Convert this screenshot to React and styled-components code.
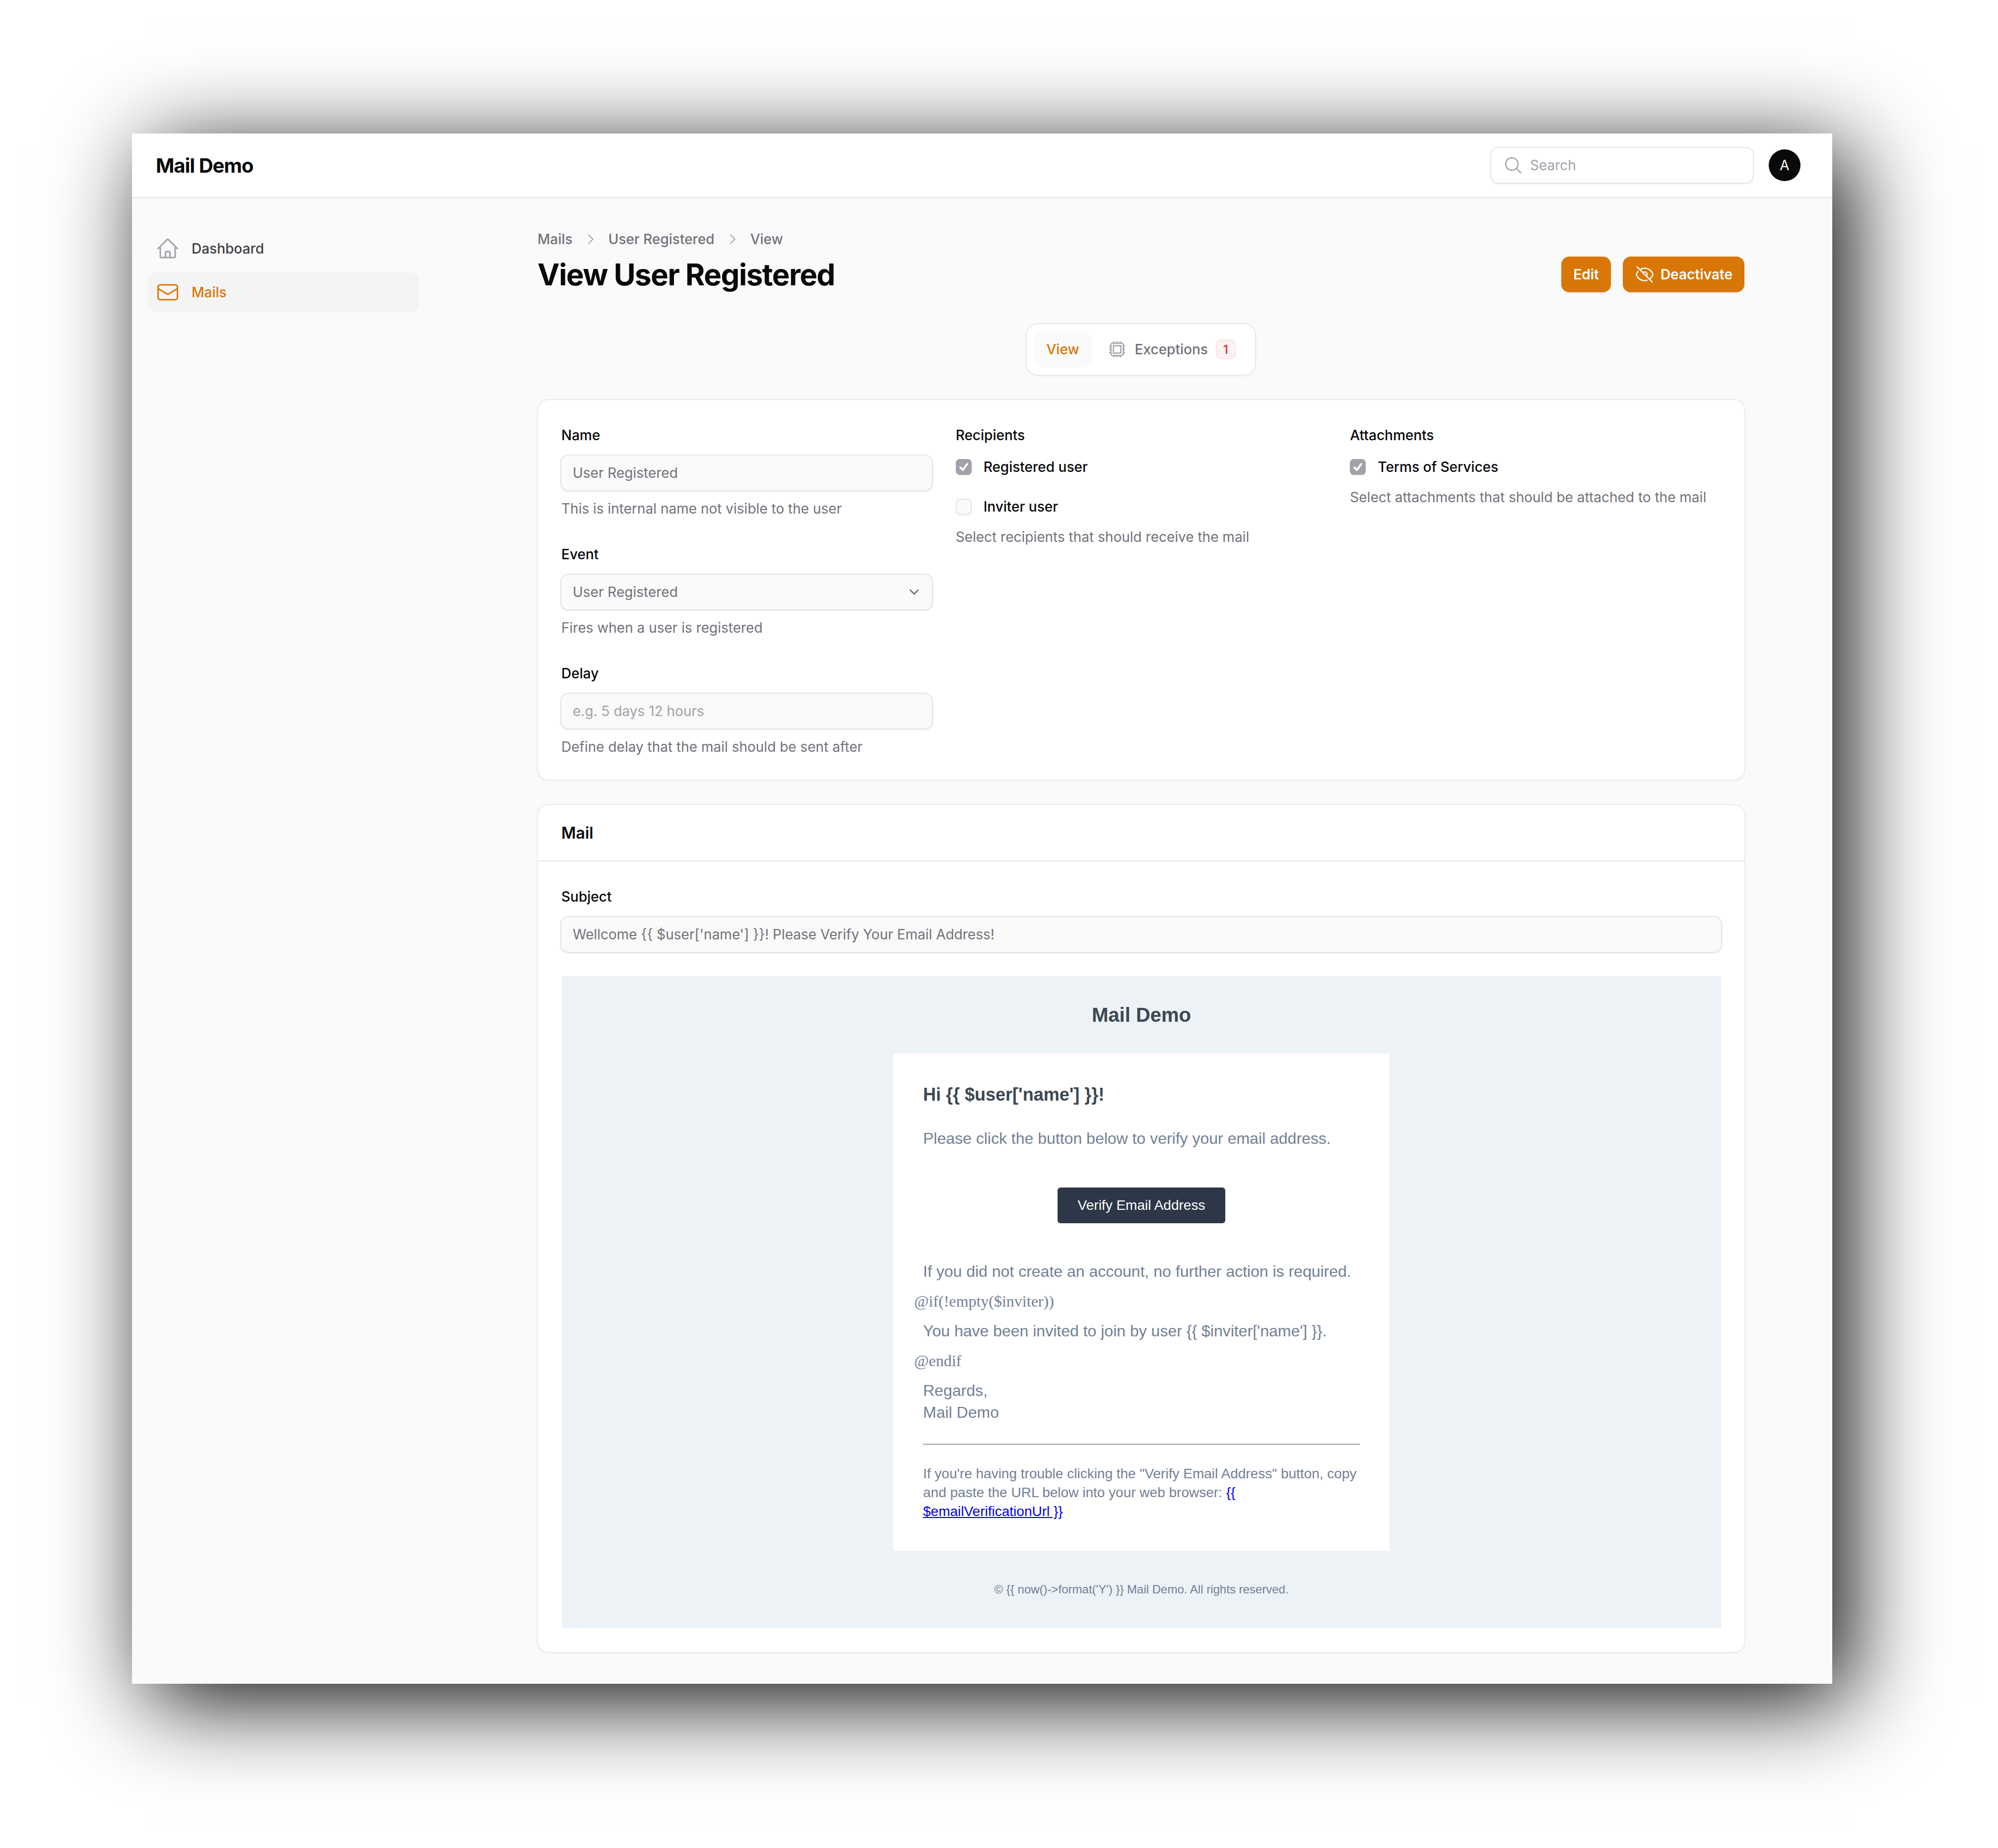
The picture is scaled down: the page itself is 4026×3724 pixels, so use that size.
import React from "react";
import styled, { createGlobalStyle } from "styled-components";

const GlobalStyle = createGlobalStyle`
  html, body { margin: 0; padding: 0; background: #fff; }
  * { box-sizing: border-box; }
  body { font-family: Inter, "Liberation Sans", sans-serif; }
`;

const Icon = ({ d, size = 40, width = 1.5, color = "currentColor" }) => (
  <svg width={size} height={size} viewBox="0 0 24 24" fill="none" stroke={color} strokeWidth={width} strokeLinecap="round" strokeLinejoin="round" style={{ flexShrink: 0 }}>
    <path d={d} />
  </svg>
);

const paths = {
  home: "m2.25 12 8.954-8.955c.44-.439 1.152-.439 1.591 0L21.75 12M4.5 9.75v10.125c0 .621.504 1.125 1.125 1.125H9.75v-4.875c0-.621.504-1.125 1.125-1.125h2.25c.621 0 1.125.504 1.125 1.125V21h4.125c.621 0 1.125-.504 1.125-1.125V9.75M8.25 21h8.25",
  mail: "M21.75 6.75v10.5a2.25 2.25 0 0 1-2.25 2.25h-15a2.25 2.25 0 0 1-2.25-2.25V6.75m19.5 0A2.25 2.25 0 0 0 19.5 4.5h-15a2.25 2.25 0 0 0-2.25 2.25m19.5 0v.243a2.25 2.25 0 0 1-1.07 1.916l-7.5 4.615a2.25 2.25 0 0 1-2.36 0L3.32 8.91a2.25 2.25 0 0 1-1.07-1.916V6.75",
  eyeSlash: "M3.98 8.223A10.477 10.477 0 0 0 1.934 12C3.226 16.338 7.244 19.5 12 19.5c.993 0 1.953-.138 2.863-.395M6.228 6.228A10.451 10.451 0 0 1 12 4.5c4.756 0 8.773 3.162 10.065 7.498a10.522 10.522 0 0 1-4.293 5.774M6.228 6.228 3 3m3.228 3.228 3.65 3.65m7.894 7.894L21 21m-3.228-3.228-3.65-3.65m0 0a3 3 0 1 0-4.243-4.243m4.242 4.242L9.88 9.88",
  cpu: "M8.25 3v1.5M4.5 8.25H3m18 0h-1.5M4.5 12H3m18 0h-1.5m-15 3.75H3m18 0h-1.5M8.25 19.5V21M12 3v1.5m0 15V21m3.75-18v1.5m0 15V21m-9-1.5h10.5a2.25 2.25 0 0 0 2.25-2.25V6.75a2.25 2.25 0 0 0-2.25-2.25H6.75A2.25 2.25 0 0 0 4.5 6.75v10.5a2.25 2.25 0 0 0 2.25 2.25Zm.75-12h9v9h-9v-9Z",
  search: "m21 21-5.197-5.197m0 0A7.5 7.5 0 1 0 5.196 5.196a7.5 7.5 0 0 0 10.607 10.607Z",
  chevronRight: "m9 5.5 6.5 6.5L9 18.5",
  chevronDown: "m6 9 6 6 6-6",
};

function Field({ label, help, children }) {
  return (
    <FieldBox>
      <Label>{label}</Label>
      {children}
      <Help>{help}</Help>
    </FieldBox>
  );
}

function Check({ checked, children }) {
  return (
    <CheckRow>
      <CheckBox $checked={checked}>
        {checked && (
          <svg width="32" height="32" viewBox="0 0 16 16" fill="none" stroke="#fff" strokeWidth="2" strokeLinecap="round" strokeLinejoin="round">
            <path d="m4.5 8.5 2.5 2.5 4.5-6" />
          </svg>
        )}
      </CheckBox>
      {children}
    </CheckRow>
  );
}

export default function App() {
  return (
    <Page>
      <GlobalStyle />
      <Window>
        <TopBar>
          <Brand>Mail Demo</Brand>
          <TopRight>
            <SearchBox>
              <Icon d={paths.search} color="#a1a1aa" />
              <SearchText>Search</SearchText>
            </SearchBox>
            <Avatar>A</Avatar>
          </TopRight>
        </TopBar>
        <Body>
          <Sidebar>
            <NavItem>
              <Icon d={paths.home} size={48} color="#a1a1aa" />
              Dashboard
            </NavItem>
            <NavItem $active>
              <Icon d={paths.mail} size={48} color="#d97706" />
              Mails
            </NavItem>
          </Sidebar>
          <Main>
            <HeaderRow>
              <div>
                <Crumbs>
                  <span>Mails</span>
                  <Icon d={paths.chevronRight} size={32} color="#a1a1aa" />
                  <span>User Registered</span>
                  <Icon d={paths.chevronRight} size={32} color="#a1a1aa" />
                  <span>View</span>
                </Crumbs>
                <Title>View User Registered</Title>
              </div>
              <Actions>
                <Button>Edit</Button>
                <Button>
                  <Icon d={paths.eyeSlash} color="#fff" />
                  Deactivate
                </Button>
              </Actions>
            </HeaderRow>

            <TabsWrap>
              <Tabs>
                <Tab $active>View</Tab>
                <Tab>
                  <Icon d={paths.cpu} color="#a1a1aa" />
                  Exceptions
                  <Badge>1</Badge>
                </Tab>
              </Tabs>
            </TabsWrap>

            <Card>
              <FormGrid>
                <Column>
                  <Field label="Name" help="This is internal name not visible to the user">
                    <TextInput readOnly value="User Registered" />
                  </Field>
                  <Field label="Event" help="Fires when a user is registered">
                    <SelectBox>
                      User Registered
                      <Icon d={paths.chevronDown} size={32} width={2} color="#6b7280" />
                    </SelectBox>
                  </Field>
                  <Field label="Delay" help="Define delay that the mail should be sent after">
                    <TextInput readOnly placeholder="e.g. 5 days 12 hours" />
                  </Field>
                </Column>
                <Column>
                  <FieldBox>
                    <Label>Recipients</Label>
                    <CheckList>
                      <Check checked>Registered user</Check>
                      <Check>Inviter user</Check>
                    </CheckList>
                    <Help>Select recipients that should receive the mail</Help>
                  </FieldBox>
                </Column>
                <Column>
                  <FieldBox>
                    <Label>Attachments</Label>
                    <CheckList>
                      <Check checked>Terms of Services</Check>
                    </CheckList>
                    <Help>Select attachments that should be attached to the mail</Help>
                  </FieldBox>
                </Column>
              </FormGrid>
            </Card>

            <MailCard>
              <MailHeader>Mail</MailHeader>
              <MailBody>
                <Label>Subject</Label>
                <TextInput readOnly value="Wellcome {{ $user['name'] }}! Please Verify Your Email Address!" />
                <EmailFrame>
                  <EmailBrand>Mail Demo</EmailBrand>
                  <EmailSheet>
                    <EmailHeading>Hi {"{{ $user['name'] }}"}!</EmailHeading>
                    <EmailIntro>Please click the button below to verify your email address.</EmailIntro>
                    <VerifyWrap>
                      <VerifyButton>Verify Email Address</VerifyButton>
                    </VerifyWrap>
                    <EmailText>If you did not create an account, no further action is required.</EmailText>
                    <RawLine>@if(!empty($inviter))</RawLine>
                    <EmailText>You have been invited to join by user {"{{ $inviter['name'] }}"}.</EmailText>
                    <RawLine>@endif</RawLine>
                    <EmailText>
                      Regards,
                      <br />
                      Mail Demo
                    </EmailText>
                    <Subcopy>
                      If you're having trouble clicking the "Verify Email Address" button, copy and paste the URL below into your web browser: <a href="#url">{"{{ $emailVerificationUrl }}"}</a>
                    </Subcopy>
                  </EmailSheet>
                  <EmailFooter>© {"{{ now()->format('Y') }}"} Mail Demo. All rights reserved.</EmailFooter>
                </EmailFrame>
              </MailBody>
            </MailCard>
          </Main>
        </Body>
      </Window>
    </Page>
  );
}

const Page = styled.div`
  width: 4026px;
  height: 3724px;
  padding: 269px 0 0 266px;
  overflow: hidden;
`;

const Window = styled.div`
  width: 3426px;
  height: 3124px;
  background: #fafafa;
  box-shadow: 34px 34px 176px rgba(0, 0, 0, 0.96);
  display: flex;
  flex-direction: column;
`;

const TopBar = styled.header`
  height: 130px;
  background: #fff;
  border-bottom: 2px solid #e6e6e7;
  padding: 0 64px 0 48px;
  display: flex;
  align-items: center;
  justify-content: space-between;
`;

const Brand = styled.div`
  font-size: 40px;
  font-weight: 700;
  letter-spacing: -1px;
  color: #09090b;
`;

const TopRight = styled.div`
  display: flex;
  align-items: center;
  gap: 30px;
`;

const SearchBox = styled.div`
  width: 531px;
  height: 74px;
  border: 2px solid #e4e4e7;
  border-radius: 16px;
  background: #fff;
  padding-left: 24px;
  display: flex;
  align-items: center;
  gap: 14px;
  box-shadow: 0 2px 3px rgba(0, 0, 0, 0.05);
`;

const SearchText = styled.span`
  font-size: 28px;
  color: #a1a1aa;
`;

const Avatar = styled.div`
  width: 64px;
  height: 64px;
  border-radius: 50%;
  background: #09090b;
  color: #fff;
  font-size: 28px;
  font-weight: 400;
  display: flex;
  align-items: center;
  justify-content: center;
`;

const Body = styled.div`
  flex: 1;
  display: flex;
`;

const Sidebar = styled.nav`
  width: 640px;
  flex-shrink: 0;
  padding: 62px 62px 0 32px;
  display: flex;
  flex-direction: column;
  gap: 8px;
`;

const NavItem = styled.div`
  height: 80px;
  padding: 0 16px;
  border-radius: 16px;
  display: flex;
  align-items: center;
  gap: 24px;
  font-size: 28px;
  font-weight: 500;
  color: ${(p) => (p.$active ? "#d97706" : "#3f3f46")};
  background: ${(p) => (p.$active ? "#f4f4f5" : "transparent")};
`;

const Main = styled.main`
  width: 2435px;
  margin-left: 176px;
  padding-top: 63px;
`;

const HeaderRow = styled.div`
  display: flex;
  justify-content: space-between;
  align-items: flex-end;
  padding: 0 2px 0 1px;
`;

const Crumbs = styled.div`
  height: 40px;
  display: flex;
  align-items: center;
  gap: 20px;
  font-size: 28px;
  font-weight: 500;
  color: #71717a;
`;

const Title = styled.h1`
  margin: 15px 0 0;
  font-size: 60px;
  line-height: 72px;
  font-weight: 700;
  letter-spacing: -1.5px;
  color: #09090b;
`;

const Actions = styled.div`
  display: flex;
  gap: 24px;
`;

const Button = styled.button`
  height: 72px;
  padding: 0 24px;
  border: 0;
  border-radius: 16px;
  background: #d97706;
  color: #fff;
  font-family: Inter, sans-serif;
  font-size: 28px;
  font-weight: 600;
  display: flex;
  align-items: center;
  gap: 12px;
  box-shadow: 0 2px 4px rgba(0, 0, 0, 0.05);
`;

const TabsWrap = styled.div`
  margin-top: 62px;
  padding-right: 2px;
  display: flex;
  justify-content: center;
`;

const Tabs = styled.div`
  width: 464px;
  height: 106px;
  border: 2px solid #e9e9ea;
  border-radius: 24px;
  background: #fff;
  padding: 0 16px;
  display: flex;
  align-items: center;
  gap: 8px;
  box-shadow: 0 2px 3px rgba(0, 0, 0, 0.04);
`;

const Tab = styled.div`
  height: 72px;
  padding: 0 24px;
  border-radius: 16px;
  display: flex;
  align-items: center;
  gap: 16px;
  font-size: 28px;
  font-weight: 500;
  color: ${(p) => (p.$active ? "#d97706" : "#71717a")};
  background: ${(p) => (p.$active ? "#fafafa" : "transparent")};
`;

const Badge = styled.span`
  width: 40px;
  height: 40px;
  border-radius: 12px;
  border: 2px solid #fee2e2;
  background: #fef2f2;
  color: #dc2626;
  font-size: 24px;
  display: flex;
  align-items: center;
  justify-content: center;
`;

const Card = styled.section`
  margin-top: 47px;
  height: 769px;
  background: #fff;
  border: 2px solid #ebebec;
  border-radius: 24px;
  padding: 51px 48px 0 47px;
  box-shadow: 0 2px 3px rgba(0, 0, 0, 0.03);
`;

const FormGrid = styled.div`
  display: grid;
  grid-template-columns: repeat(3, minmax(0, 1fr));
  column-gap: 48px;
`;

const Column = styled.div`
  display: flex;
  flex-direction: column;
  gap: 52px;
`;

const FieldBox = styled.div`
  display: flex;
  flex-direction: column;
`;

const Label = styled.label`
  font-size: 28px;
  line-height: 40px;
  font-weight: 500;
  color: #09090b;
  margin-bottom: 19px;
`;

const Help = styled.p`
  margin: 15px 0 0;
  font-size: 28px;
  line-height: 40px;
  color: #71717a;
`;

const inputStyles = `
  width: calc(100% + 4px);
  margin: 0 -2px;
  height: 74px;
  border: 2px solid #e4e4e7;
  border-radius: 16px;
  background: #fafafa;
  padding: 0 23px;
  font-family: Inter, sans-serif;
  font-size: 28px;
  color: #71717a;
  outline: none;
  box-shadow: 0 2px 3px rgba(0, 0, 0, 0.05);
`;

const TextInput = styled.input`
  ${inputStyles}
  &::placeholder { color: #a1a1aa; }
`;

const SelectBox = styled.div`
  ${inputStyles}
  display: flex;
  align-items: center;
  justify-content: space-between;
  padding-right: 20px;
`;

const CheckList = styled.div`
  display: flex;
  flex-direction: column;
  gap: 40px;
  margin: 5px 0 6px;
`;

const CheckRow = styled.div`
  height: 40px;
  display: flex;
  align-items: center;
  gap: 24px;
  font-size: 28px;
  font-weight: 500;
  color: #09090b;
`;

const CheckBox = styled.span`
  width: 32px;
  height: 32px;
  border-radius: 8px;
  flex-shrink: 0;
  background: ${(p) => (p.$checked ? "#a1a1aa" : "#fafafa")};
  border: ${(p) => (p.$checked ? "0" : "2px solid #e4e4e7")};
  box-shadow: 0 2px 3px rgba(0, 0, 0, 0.05);
  display: flex;
`;

const MailCard = styled.section`
  margin-top: 47px;
  background: #fff;
  border: 2px solid #ebebec;
  border-radius: 24px;
  box-shadow: 0 2px 3px rgba(0, 0, 0, 0.03);
`;

const MailHeader = styled.div`
  height: 114px;
  padding: 0 47px;
  border-bottom: 2px solid #e6e6e7;
  display: flex;
  align-items: center;
  font-size: 32px;
  font-weight: 600;
  color: #09090b;
`;

const MailBody = styled.div`
  padding: 51px 47px 48px;
  display: flex;
  flex-direction: column;
`;

const EmailFrame = styled.div`
  margin: 47px 0 0 1px;
  background: #edf2f7;
  height: 1314px;
  display: flex;
  flex-direction: column;
  align-items: center;
  font-family: "Liberation Sans", Arial, sans-serif;
`;

const EmailBrand = styled.div`
  height: 156px;
  display: flex;
  align-items: center;
  font-size: 40px;
  font-weight: 700;
  color: #3d4852;
`;

const EmailSheet = styled.div`
  width: 1000px;
  height: 1002px;
  background: #fff;
  padding: 60px 60px 0;
`;

const EmailHeading = styled.h2`
  margin: 0;
  font-size: 36px;
  line-height: 46px;
  font-weight: 700;
  color: #3d4852;
`;

const EmailText = styled.p`
  margin: 0;
  font-size: 32px;
  line-height: 44px;
  color: #718096;
`;

const EmailIntro = styled(EmailText)`
  margin-top: 43px;
`;

const VerifyWrap = styled.div`
  display: flex;
  justify-content: center;
  margin: 77px 0 75px;
`;

const VerifyButton = styled.div`
  width: 338px;
  height: 72px;
  border-radius: 6px;
  background: #2d3748;
  color: #fff;
  font-size: 28px;
  display: flex;
  align-items: center;
  justify-content: center;
`;

const RawLine = styled.div`
  margin: 22px 0 22px -18px;
  font-family: "Liberation Serif", "Times New Roman", serif;
  font-size: 32px;
  line-height: 32px;
  color: #718096;
`;

const Subcopy = styled.p`
  margin: 41px 0 0;
  padding-top: 39px;
  border-top: 3px solid #b8b8b8;
  font-size: 28px;
  line-height: 38px;
  color: #718096;
  & a { color: #0000ee; }
`;

const EmailFooter = styled.div`
  flex: 1;
  display: flex;
  align-items: center;
  font-size: 24px;
  color: #718096;
`;
